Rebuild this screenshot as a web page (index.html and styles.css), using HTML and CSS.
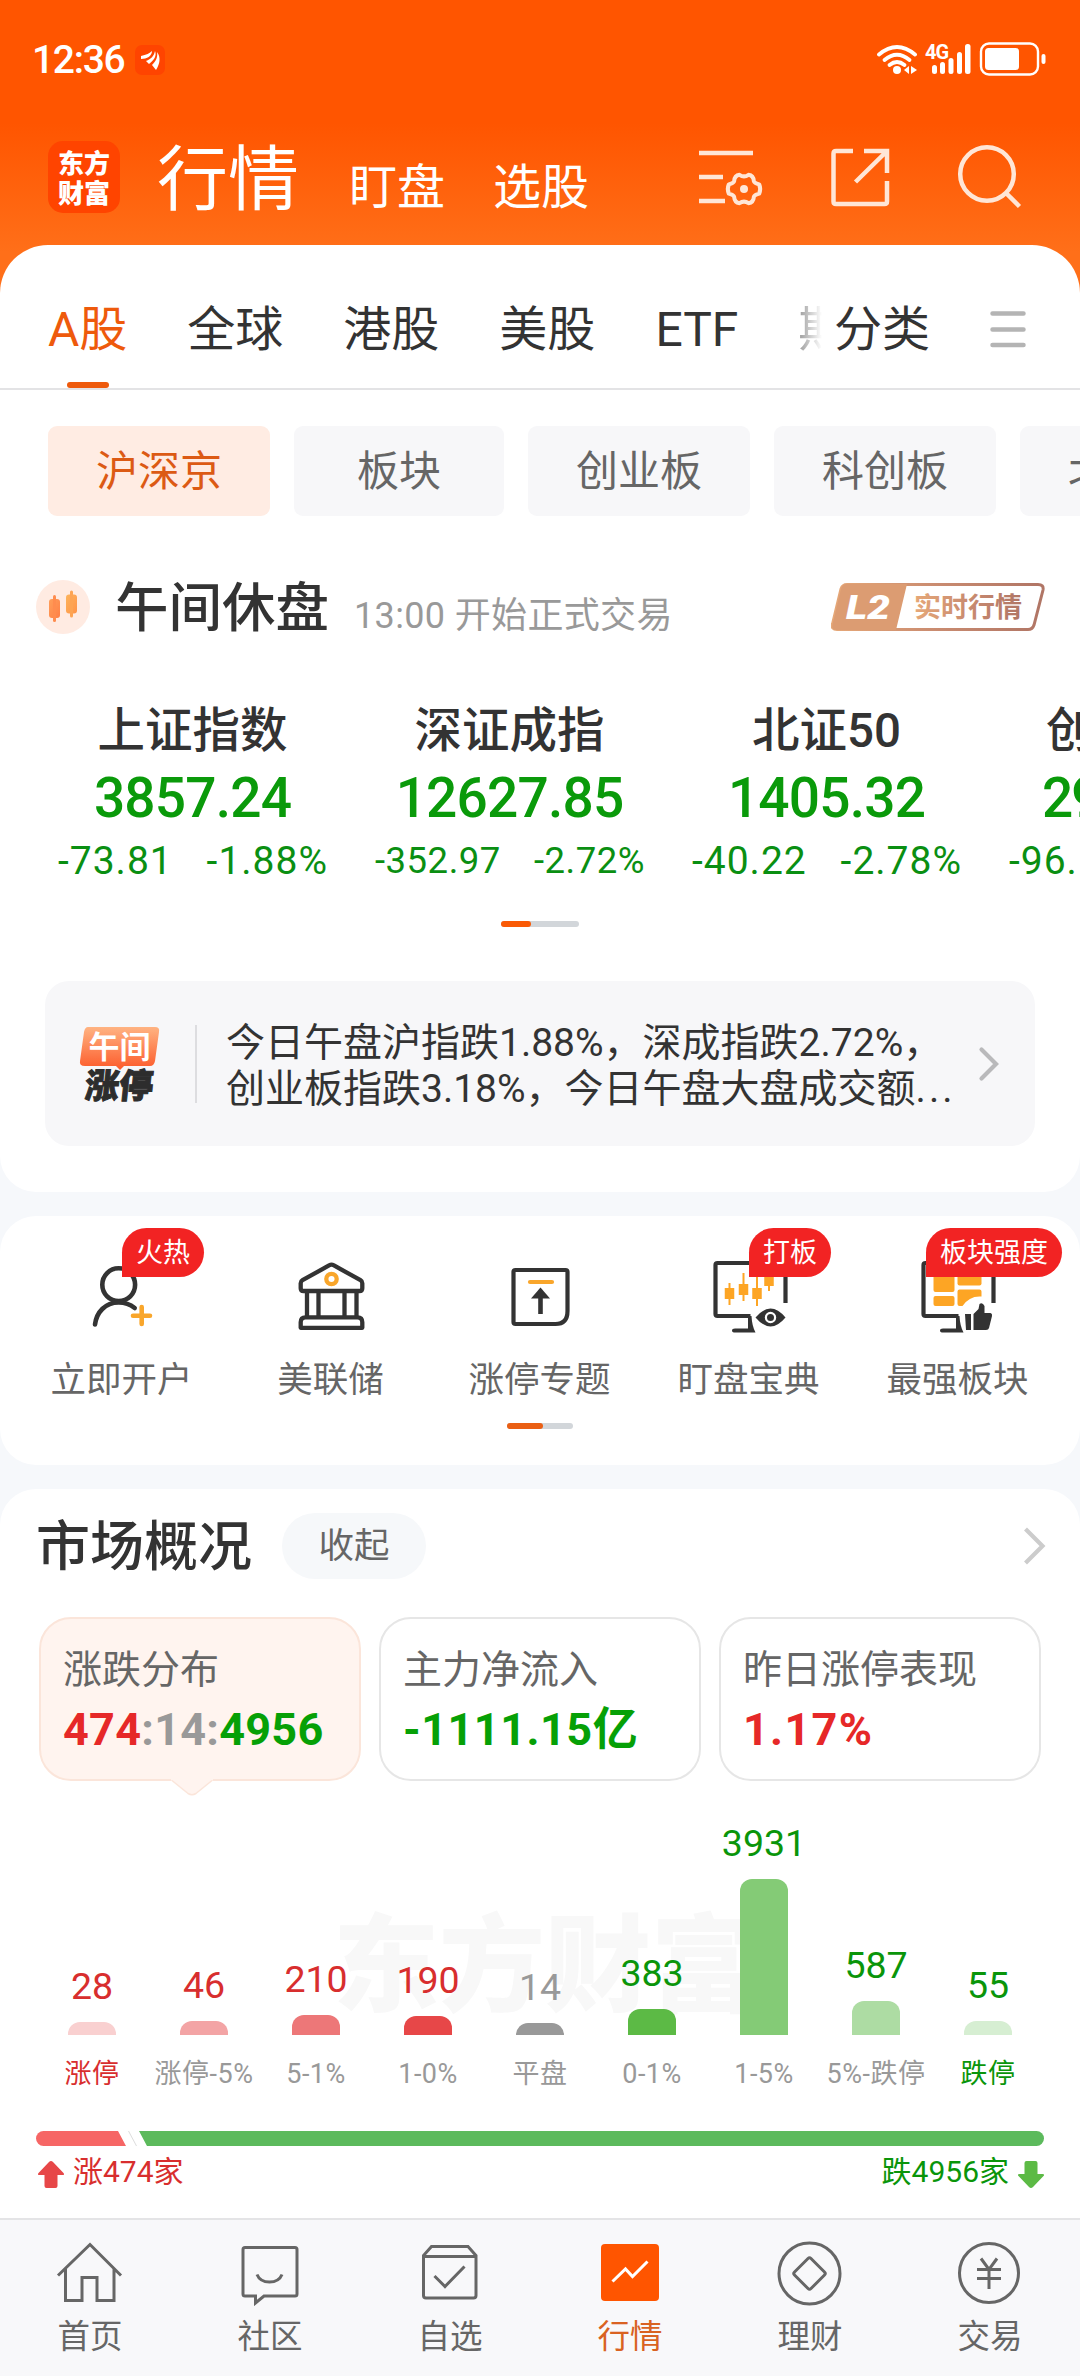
FILE: index.html
```html
<!DOCTYPE html>
<html lang="zh-CN">
<head>
<meta charset="utf-8">
<title>行情</title>
<link rel="stylesheet" href="styles.css">
</head>
<body>
<div class="screen">
  <div class="statusbar">
    <span class="clock">12:36</span>
    <svg class="mini-app" viewBox="0 0 30 30" width="30" height="30">
      <rect width="30" height="30" rx="7" fill="#ff4400"/>
      <path d="M6 11C11 10 15 8 17 6c0 5-5 8-11 8zM11 16c5-2 8-5 9-10 2 5-1 9-6 13zM17 20c4-4 6-8 5-13 4 5 3 12-1 18z" fill="#fff"/>
    </svg>
    <svg class="signals" viewBox="876 40 172 40" width="172" height="40">
      <g fill="none" stroke="#fff" stroke-width="3.8" stroke-linecap="round">
        <path d="M879 54.500q18-15 36 0"/>
        <path d="M884.500 60q12.500-10.500 25 0"/>
        <path d="M889.500 65q7.500-6 15 0"/>
      </g>
      <circle cx="897" cy="70" r="4" fill="#fff"/>
      <path d="M909 66v8l-5-4zM911 66v8l6-4z" fill="#fff"/>
      <text x="925" y="59" class="net">4G</text>
      <g fill="#fff">
        <rect x="932" y="65" width="5" height="9" rx="2.500"/>
        <rect x="940" y="62" width="5" height="12" rx="2.500"/>
        <rect x="948.500" y="58" width="5" height="16" rx="2.500"/>
        <rect x="957" y="52" width="5" height="22" rx="2.500"/>
        <rect x="965" y="44" width="5.500" height="30" rx="2.500"/>
        <rect x="985" y="48" width="34" height="22" rx="3.500"/>
        <rect x="1041.500" y="54" width="4" height="10" rx="2"/>
      </g>
      <rect x="981" y="43.500" width="57" height="31" rx="8" fill="none" stroke="#fff" stroke-width="2.400"/>
    </svg>
  </div>

  <header class="titlebar">
    <div class="logo"><span>东方</span><span>财富</span></div>
    <nav class="titles">
      <span class="title-main">行情</span>
      <span>盯盘</span>
      <span>选股</span>
    </nav>
    <div class="actions">
      <svg viewBox="695 145 70 64" width="70" height="64" fill="none" stroke="#ffe6d6" stroke-width="4.500">
        <path d="M699 153h54M699 177h24M699 201h26"/>
        <path stroke-linejoin="round" stroke-width="4" d="M739.500 174.800q4.500 3.200 9 0q5 .6 5.400 6.600q.6 1.800 5.300 3q2 4.600 0 9.200q-4.700 1.200-5.300 3q-.4 6-5.400 6.600q-4.500-3.200-9 0q-5-.6-5.400-6.600q-.6-1.800-5.300-3q-2-4.600 0-9.200q4.700-1.200 5.300-3q.4-6 5.400-6.600z"/>
        <circle cx="744" cy="189" r="4" fill="#ffe6d6" stroke="none"/>
      </svg>
      <svg viewBox="825 145 66 64" width="66" height="64" fill="none" stroke="#ffe6d6" stroke-width="4.500">
        <path d="M851 151h-17q-2.500 0-2.500 2.500v48q0 2.500 2.500 2.500h48.500q2.500 0 2.500-2.500V181M862 151h23v22M885 151l-31.500 31"/>
      </svg>
      <svg viewBox="955 143 68 68" width="68" height="68" fill="none" stroke="#ffe6d6" stroke-width="4.500">
        <circle cx="987" cy="174" r="26.800"/>
        <path d="M1006 193l13.500 13.500"/>
      </svg>
    </div>
  </header>

  <main>
    <section class="card card-top">
      <div class="tabs">
        <div class="tab-list">
          <span class="tab active">A股</span>
          <span class="tab">全球</span>
          <span class="tab">港股</span>
          <span class="tab">美股</span>
          <span class="tab">ETF</span>
          <span class="tab fading">期</span>
        </div>
        <span class="tab-sort">分类</span>
        <svg class="menu" viewBox="0 0 36 40" width="36" height="40" stroke="#b4b4b4" stroke-width="4.500" stroke-linecap="round"><path d="M2.500 4.500h31M2.500 20.500h31M2.500 36h31"/></svg>
      </div>

      <div class="chips">
        <span class="chip on">沪深京</span>
        <span class="chip">板块</span>
        <span class="chip">创业板</span>
        <span class="chip">科创板</span>
        <span class="chip">北交所</span>
      </div>

      <div class="session">
        <svg viewBox="0 0 54 54" width="54" height="54">
          <defs>
            <linearGradient id="k1" x1="0" y1="0" x2="1" y2="1"><stop offset="0" stop-color="#ff9f5a"/><stop offset="1" stop-color="#ff7f45"/></linearGradient>
            <linearGradient id="k2" x1="0" y1="0" x2="1" y2="1"><stop offset="0" stop-color="#fdb45c"/><stop offset="1" stop-color="#ff9448"/></linearGradient>
          </defs>
          <circle cx="27" cy="27" r="27" fill="#ffebe2"/>
          <rect x="13" y="19" width="11" height="19" rx="3" fill="url(#k1)"/><rect x="17" y="15" width="3" height="27" rx="1.500" fill="#ff8c4e"/>
          <rect x="30" y="14.500" width="11" height="19" rx="3" fill="url(#k2)"/><rect x="34" y="10.500" width="3" height="27" rx="1.500" fill="#fda453"/>
        </svg>
        <h2>午间休盘</h2>
        <span class="note">13:00 开始正式交易</span>
        <svg class="level2" viewBox="0 0 214 48" width="214" height="48">
          <defs><linearGradient id="lv"><stop offset="0" stop-color="#e6a878"/><stop offset=".5" stop-color="#c98b70"/><stop offset="1" stop-color="#b07565"/></linearGradient></defs>
          <path d="M16 1.500H207q6 0 5 5.500L203 42q-1.500 4.500-6 4.500H6q-6 0-4.500-5.500L10 6q1.500-4.500 6-4.500z" fill="#fff" stroke="url(#lv)" stroke-width="3"/>
          <path d="M16 1H76L65 47H6q-6 0-4.500-5.500L10 6q1.500-5 6-5z" fill="#dc9c72"/>
          <text x="15" y="36" class="lv-tag" textLength="44" lengthAdjust="spacingAndGlyphs">L2</text>
          <text x="83" y="33.500" class="lv-text" fill="url(#lv)">实时行情</text>
        </svg>
      </div>

      <div class="indices">
        <div class="index"><b>上证指数</b><strong>3857.24</strong><p><span>-73.81</span><span>-1.88%</span></p></div>
        <div class="index narrow"><b>深证成指</b><strong>12627.85</strong><p><span>-352.97</span><span>-2.72%</span></p></div>
        <div class="index"><b>北证50</b><strong>1405.32</strong><p><span>-40.22</span><span>-2.78%</span></p></div>
        <div class="index cut"><b>创业板指</b><strong>29</strong><p><span>-96.</span></p></div>
      </div>
      <div class="pager"><i></i></div>

      <div class="news">
        <svg viewBox="78 1026 84 78" width="84" height="78">
          <defs><linearGradient id="nb" x1="0" y1="0" x2="0" y2="1"><stop offset="0" stop-color="#ffb382"/><stop offset="1" stop-color="#fc5a2a"/></linearGradient></defs>
          <path d="M88 1028h67q5 0 4 5l-4 29q-1 5-5 5h-26l-4 4-4-4h-31q-6 0-5-5l4-29q1-5 4-5z" fill="url(#nb)"/>
          <text x="88.500" y="1059" class="nb-top">午间</text>
          <text transform="translate(84 1099) skewX(-6)" class="nb-bottom">涨停</text>
        </svg>
        <div class="news-text">今日午盘沪指跌1.88%，深成指跌2.72%，<br>创业板指跌3.18%，今日午盘大盘成交额<span class="dots">...</span></div>
        <svg viewBox="0 0 22 36" width="22" height="36" fill="none" stroke="#b9b9bb" stroke-width="4.200" stroke-linecap="round"><path d="M3.500 3.500L18 18 3.500 32.500"/></svg>
      </div>
    </section>

    <section class="card shortcuts">
      <div class="grid">
        <div class="item">
          <svg viewBox="76.500 1256 90 80" width="90" height="80" fill="none" stroke="#333" stroke-width="4.600" stroke-linecap="round">
            <circle cx="118.200" cy="1284.700" r="16.400"/>
            <path d="M94.500 1324.500c1.500-12 10-22 23.700-22q9 0 16 5.500"/>
            <path d="M141.200 1307v17M132.500 1315.800h17" stroke="#f9a62b"/>
          </svg>
          <em>火热</em><span>立即开户</span>
        </div>
        <div class="item">
          <svg viewBox="285.500 1256 90 80" width="90" height="80" fill="none" stroke="#333" stroke-width="4.300" stroke-linejoin="round">
            <path d="M329 1265.200q2-1.200 4 0l27 15q1.800 1 1.800 3v5q0 2.800-2.800 2.800h-56q-2.800 0-2.800-2.800v-5q0-2 1.800-3z"/>
            <path d="M306.500 1291v26M318 1291v26M344 1291v26M356 1291v26"/>
            <path d="M305 1317.300h52q4.800 0 4.800 5v5.500h-61.600v-5.500q0-5 4.800-5z"/>
            <circle cx="331" cy="1279" r="5.200" stroke="#f9a62b"/>
          </svg>
          <span>美联储</span>
        </div>
        <div class="item">
          <svg viewBox="494.500 1256 90 80" width="90" height="80" fill="none" stroke="#333" stroke-width="4.200">
            <path d="M515 1270h50q2 0 2 2v39q0 13-12 13h-40q-2 0-2-2v-50q0-2 2-2z"/>
            <path d="M529.500 1282h22" stroke="#f9a62b" stroke-linecap="round"/>
            <path d="M540 1293v21" stroke-width="4.600"/><path d="M540 1287.500l9.500 11h-19z" fill="#333" stroke="none"/>
          </svg>
          <span>涨停专题</span>
        </div>
        <div class="item">
          <svg viewBox="703.500 1256 90 80" width="90" height="80" fill="none" stroke="#333" stroke-width="4.200">
            <path d="M785 1303V1265q0-2-2-2h-66q-2 0-2 2v49q0 2 2 2h33"/>
            <path d="M747.500 1316h3.500q.5 10 4 16.500h-20.500q-3 0-3-2t3-2h13z" fill="#333" stroke="none"/>
            <g stroke="#fda524"><path stroke-width="2" d="M729 1283v22M743 1273v28M756.500 1277v29M768.500 1266v25"/><path stroke-width="9.500" d="M729 1288v11M743 1284v11M756.500 1288v11M768.500 1274v12"/></g>
            <path d="M755 1317.500q15-18 30 0q-15 18-30 0z" fill="#333" stroke="none"/>
            <circle cx="770" cy="1317.500" r="4.600" stroke="#fff" stroke-width="2.200"/>
          </svg>
          <em>打板</em><span>盯盘宝典</span>
        </div>
        <div class="item">
          <svg viewBox="912.500 1256 90 80" width="90" height="80" fill="none" stroke="#333" stroke-width="4.200">
            <path d="M993 1303V1265q0-2-2-2h-66q-2 0-2 2v49q0 2 2 2h33"/>
            <path d="M955.500 1316h3.500q.5 10 4 16.500h-20.500q-3 0-3-2t3-2h13z" fill="#333" stroke="none"/>
            <g fill="#fda524" stroke="none"><rect x="933" y="1268" width="21" height="24" rx="2"/><rect x="933" y="1296" width="21" height="10" rx="2"/><rect x="957" y="1268" width="24" height="17.500" rx="2"/><path d="M959 1289.500h20q2 0 2 2v5q-12-1-19 9.500h-3q-2 0-2-2v-12.500q0-2 2-2z"/></g>
            <path d="M964.500 1314h6v16h-5zM973 1314l5-5 1-5q3-2 5 2v7h6q2 .5 1.500 3l-3 12q-.5 2-3 2H973z" fill="#333" stroke="none"/>
          </svg>
          <em class="wide">板块强度</em><span>最强板块</span>
        </div>
      </div>
      <div class="pager small"><i></i></div>
    </section>

    <section class="card market">
      <div class="market-head">
        <h2>市场概况</h2><span class="fold">收起</span>
        <svg viewBox="0 0 24 40" width="24" height="40" fill="none" stroke="#ccc" stroke-width="4.200"><path d="M3.500 3L20.500 20 3.500 37"/></svg>
      </div>
      <div class="stats">
        <div class="stat on">
          <span>涨跌分布</span><strong><i class="up">474</i><i class="flat">:14:</i><i class="down">4956</i></strong>
          <svg class="tip" viewBox="0 0 42 17" width="42" height="17"><path d="M0 0h42v1.500H40.500L25 14.500q-4 2.500-8 0L1.500 1.500H0z" fill="#fff4ef"/><path d="M1 1.500L17 14.500q4 2.500 8 0L41 1.500" fill="none" stroke="#fbe5da" stroke-width="1.500"/></svg>
        </div>
        <div class="stat"><span>主力净流入</span><strong class="down">-1111.15亿</strong></div>
        <div class="stat"><span>昨日涨停表现</span><strong class="up">1.17%</strong></div>
      </div>

      <div class="chart">
        <div class="watermark">东方财富</div>
        <div class="col"><b class="up">28</b><i style="height:13px;background:#f9d0d0"></i></div>
        <div class="col"><b class="up">46</b><i style="height:14px;background:#f3a4a5"></i></div>
        <div class="col"><b class="up">210</b><i style="height:20px;background:#ed7778"></i></div>
        <div class="col"><b class="up">190</b><i style="height:19px;background:#e74748"></i></div>
        <div class="col"><b class="flat">14</b><i style="height:12px;background:#999"></i></div>
        <div class="col"><b class="down">383</b><i style="height:26px;background:#5cba45"></i></div>
        <div class="col"><b class="down">3931</b><i style="height:156px;background:#84cb76"></i></div>
        <div class="col"><b class="down">587</b><i style="height:34px;background:#addca3"></i></div>
        <div class="col"><b class="down">55</b><i style="height:14px;background:#d6eed2"></i></div>
      </div>
      <div class="axis">
        <span class="up">涨停</span><span>涨停-5%</span><span>5-1%</span><span>1-0%</span><span>平盘</span><span>0-1%</span><span>1-5%</span><span>5%-跌停</span><span class="down">跌停</span>
      </div>
      <svg class="ratio" viewBox="0 0 1008 15" width="1008" height="15">
        <path d="M7.500 0H82l8 15H7.500a7.500 7.500 0 0 1 0-15z" fill="#f66665"/>
        <path d="M92.500 0l8 15" stroke="#ddd" stroke-width="1"/>
        <path d="M103 0h897.500a7.500 7.500 0 0 1 0 15H111z" fill="#5cba5c"/>
      </svg>
      <div class="legend">
        <svg viewBox="0 0 26 27" width="26" height="27"><path d="M13 0q1 0 2 1l10.500 11q1.500 2-1 2H19.500v11q0 2-2 2h-9q-2 0-2-2V14H1.500q-2.500 0-1-2L11 1q1-1 2-1z" fill="#e74748"/></svg>
        <span class="up">涨474家</span>
        <span class="down fall">跌4956家</span>
        <svg viewBox="0 0 26 27" width="26" height="27"><path d="M13 27q1 0 2-1l10.500-11q1.500-2-1-2H19.500V2q0-2-2-2h-9q-2 0-2 2v11H1.500q-2.500 0-1 2L11 26q1 1 2 1z" fill="#5cba45"/></svg>
      </div>
    </section>
  </main>

  <nav class="tabbar">
    <div><svg viewBox="55 2240 70 66" width="70" height="66"><path d="M58 2275.500l32-31 31 31M65.500 2269v31.500h16.500v-23h15v23h17V2269"/></svg><span>首页</span></div>
    <div><svg viewBox="235 2240 70 66" width="70" height="66"><path d="M245 2247.500h50q2 0 2 2v44.500q0 2-2 2h-31l-8.500 7v-7H245q-2 0-2-2v-44.500q0-2 2-2z"/><path d="M257 2274.500q3 7.500 12.500 7.500t12.500-7.500"/></svg><span>社区</span></div>
    <div><svg viewBox="415 2240 70 66" width="70" height="66"><path d="M423.500 2255.500v40q0 2.500 2.500 2.500h47.500q2.500 0 2.500-2.500v-40l-8-9h-36.500zM423.500 2256.500h52.500M434.500 2276l10.500 10.500 19.500-20"/></svg><span>自选</span></div>
    <div class="current"><svg viewBox="595 2240 70 66" width="70" height="66"><rect x="601" y="2244" width="58" height="57" rx="4" fill="#ff5500" stroke="none"/><path d="M612.500 2281.500l13-12.500 7 7.500 15-15" stroke="#fff"/></svg><span>行情</span></div>
    <div><svg viewBox="775 2240 70 66" width="70" height="66"><circle cx="809.500" cy="2273.500" r="30.500"/><path d="M808 2258.500q1.500-1.500 3 0l13.500 13.500q1.500 1.500 0 3L811 2288.500q-1.500 1.500-3 0L794.500 2275q-1.500-1.500 0-3z"/></svg><span>理财</span></div>
    <div><svg viewBox="955 2240 70 66" width="70" height="66"><circle cx="989" cy="2273" r="29.500"/><path d="M981 2258.500l8 11 8-11M977 2269.500h24M977 2278.500h24M989 2269v20"/></svg><span>交易</span></div>
  </nav>
</div>
</body>
</html>
```

FILE: styles.css
```css
* { box-sizing: border-box; margin: 0; padding: 0; }
body { background: #f6f8fb; font-family: Roboto, "Noto Sans CJK SC", sans-serif; color: #333; }
i, em { font-style: normal; }
svg { display: block; flex: none; }

.screen {
  width: 1080px; height: 2376px; overflow: hidden;
  display: flex; flex-direction: column;
  background: linear-gradient(#ff5500 0, #ff5500 42%, #ff6f19 86%, #ff6f19 100%) no-repeat 0 0 / 100% 293px #f6f8fb;
}

.up { color: #d82e2e; }
.down { color: #0a950a; }
.flat { color: #999; }

/* status bar */
.statusbar { display: flex; align-items: center; height: 120px; padding: 0 32px; flex: none; }
.clock { font-size: 39px; font-weight: 500; color: #fff; line-height: 40px; width: 103px; letter-spacing: -1.3px; }
.signals { margin-left: auto; }
.net { font: 700 20px Roboto, sans-serif; fill: #fff; letter-spacing: -1px; }

/* title bar */
.titlebar { display: flex; align-items: center; height: 125px; padding: 0 57px 11px 48px; flex: none; }
.logo {
  width: 72px; height: 72px; border-radius: 15px; background: #ff4400; color: #fff;
  display: flex; flex-direction: column; align-items: center; justify-content: center;
  font: 900 26px/30px "Noto Sans CJK SC", sans-serif;
}
.titles { display: flex; align-items: baseline; gap: 48px; margin-left: 37px; padding-top: 13px; color: #fff; font-size: 48px; line-height: 80px; }
.title-main { font-size: 71px; }
.titles .title-main + span { margin-left: 2px; }
.actions { display: flex; align-items: center; margin-left: auto; gap: 62px; }

/* cards */
main { display: flex; flex-direction: column; gap: 24px; flex: none; }
.card { background: #fff; border-radius: 36px; }
.card-top { height: 947px; border-radius: 48px 48px 36px 36px; overflow: hidden; }

.tabs { display: flex; height: 145px; padding: 24px 54px 0 48px; border-bottom: 2px solid #e3e3e5; font-size: 48px; line-height: 122px; }
.tab-list { display: flex; gap: 60px; width: 776px; overflow: hidden; white-space: nowrap; }
.tab { position: relative; flex: none; }
.tab.active { color: #ee5a0c; }
.tab.active::after {
  content: ""; position: absolute; left: 19px; bottom: 0; width: 42px; height: 6px; border-radius: 3px; background: #ee5a0c;
}
.tab.fading { color: transparent; background: linear-gradient(90deg, #999 0, #fff 24px); -webkit-background-clip: text; background-clip: text; }
.tab-sort { margin-left: 10px; }
.menu { margin: 40px 0 0 auto; }

.chips { display: flex; gap: 24px; margin: 36px 0 0 48px; font-size: 42px; line-height: 88px; white-space: nowrap; }
.chip { flex: none; min-width: 210px; padding: 2px 48px 0; text-align: center; border-radius: 9px; background: #f7f7f9; color: #666; }
.chip.on { background: #ffece3; color: #dc5a14; }

.session { display: flex; align-items: center; height: 72px; margin-top: 55px; padding: 0 35px 0 36px; }
.session h2 { font-size: 53.5px; font-weight: 500; margin-left: 25px; padding-top: 3px; line-height: 72px; }
.note { font-size: 36px; color: #999; margin: 10px 0 0 25px; letter-spacing: .35px; }
.level2 { margin-left: auto; }
.lv-tag { font: italic 900 34px Roboto, sans-serif; fill: #fff; }
.lv-text { font: 700 27px "Noto Sans CJK SC", sans-serif; }

.indices { display: flex; margin: 60px 0 0 34px; }
.index { flex: none; width: 317px; text-align: center; display: flex; flex-direction: column; }
.index b { font-size: 47.500px; font-weight: 500; line-height: 56px; }
.index strong { font-size: 55px; font-weight: 500; line-height: 64px; margin-top: 7px; letter-spacing: -.8px; color: #0a9a0a; }
.index p { display: flex; justify-content: space-between; padding: 0 23px 0 24px; font-size: 39px; line-height: 56px; margin-top: 3px; color: #0a8f12; letter-spacing: 1px; }
.index.narrow p { font-size: 36.500px; letter-spacing: .5px; }
.index.cut { text-align: left; padding-left: 61px; white-space: nowrap; }
.index.cut strong { margin-left: -4px; letter-spacing: -2px; }
.index.cut p { padding: 0; margin-left: -37px; }

.pager { width: 78px; height: 6px; border-radius: 3px; background: #d2d6da; margin: 32px auto 0; }
.pager i { display: block; width: 30px; height: 6px; border-radius: 3px; background: #fa5a05; }

.news { display: flex; align-items: center; margin: 54px 45px 0; height: 165px; border-radius: 24px; background: #f7f7f9; padding-left: 33px; }
.nb-top { font: 700 31px "Noto Sans CJK SC", sans-serif; fill: #fff; }
.nb-bottom { font: 900 34px "Noto Sans CJK SC", sans-serif; fill: #2d2d2d; stroke: #2d2d2d; stroke-width: 1; }
.news-text {
  display: flow-root; width: 783px; height: 78px; margin-left: 33px; padding-left: 29px;
  border-left: 2px solid #dddde0; font-size: 39px; line-height: 46px; white-space: nowrap;
}
.news-text::before { content: ""; display: block; margin-top: -5px; }
.dots { letter-spacing: 3px; }

/* shortcuts */
.shortcuts { height: 249px; }
.grid { display: grid; grid-template-columns: repeat(5, 209px); padding: 40px 18px 0 17px; }
.item { position: relative; display: flex; flex-direction: column; align-items: center; font-size: 35.500px; line-height: 56px; color: #666; }
.item span { margin-top: 16px; }
.item em {
  position: absolute; left: 105px; top: -28px; height: 49px; padding: 1px 14px 0; border-radius: 25px 25px 25px 0;
  background: #f22323; color: #fff; font-size: 27px; line-height: 49px; white-space: nowrap;
}
.item em.wide { left: 73px; }
.pager.small { width: 66px; margin-top: 15px; }
.pager.small i { width: 36px; background: #ea5f14; }

/* market overview */
.market { height: 767px; padding: 24px 36px 0; border-radius: 36px 36px 0 0; }
.market-head { display: flex; align-items: center; height: 66px; }
.market-head h2 { font-size: 54px; font-weight: 500; line-height: 66px; padding-top: 4px; }
.fold { margin-left: 30px; width: 144px; border-radius: 33px; background: #f6f8fa; text-align: center; font-size: 35.500px; line-height: 65px; padding-top: 1px; color: #666; }
.market-head svg { margin: 0 -2px 0 auto; }
.stats { display: grid; grid-template-columns: repeat(3, 322px); gap: 18px; margin: 38px 0 0 3px; }
.stat { position: relative; height: 164px; border: 2px solid #e6e6e6; border-radius: 32px; padding: 27px 0 0 22px; display: flex; flex-direction: column; color: #666; font-size: 39px; line-height: 48px; }
.stat strong { font-size: 45px; font-weight: 700; line-height: 56px; margin-top: 8px; letter-spacing: .5px; }
.stat .down { color: #06a006; }
.stat strong.up, .stat strong .up { color: #e62828; }
.stat strong.up { letter-spacing: 1.300px; }
.stat.on { background: #fff4ef; border-color: #fbe5da; }
.stat.on strong { letter-spacing: .25px; }
.tip { position: absolute; left: 130px; top: 160px; }

.chart { position: relative; display: grid; grid-template-columns: repeat(9, 112px); height: 254px; }
.watermark { position: absolute; left: 297px; top: 101px; font: 900 106px/150px "Noto Sans CJK SC", sans-serif; color: #f8f8f8; white-space: nowrap; }
.col { position: relative; display: flex; flex-direction: column; justify-content: flex-end; align-items: center; }
.col b { font-size: 37.500px; font-weight: 400; line-height: 40px; margin-bottom: 16px; }
.col i { width: 48px; border-radius: 12px 12px 0 0; }
.axis { display: grid; grid-template-columns: repeat(9, 112px); margin-top: 19px; font-size: 27px; line-height: 40px; text-align: center; color: #999; white-space: nowrap; letter-spacing: .5px; }
.ratio { margin-top: 37px; }
.legend { display: flex; align-items: center; height: 40px; margin-top: 8px; padding: 0 0 0 2px; font-size: 30px; gap: 9px; }
.legend span { line-height: 36px; margin-top: -4px; }
.fall { margin-left: auto; }

/* bottom bar */
.tabbar { display: grid; grid-template-columns: repeat(6, 180px); flex: none; height: 158px; margin-top: -38px; background: #f8f8fa; border-top: 2px solid #e4e4e6; position: relative; }
.tabbar div { display: flex; flex-direction: column; align-items: center; padding-top: 20px; font-size: 32.500px; line-height: 48px; color: #666; }
.tabbar svg { fill: none; stroke: #666; stroke-width: 3; }
.tabbar span { margin-top: 7px; }
.tabbar .current { color: #d96222; }
```
